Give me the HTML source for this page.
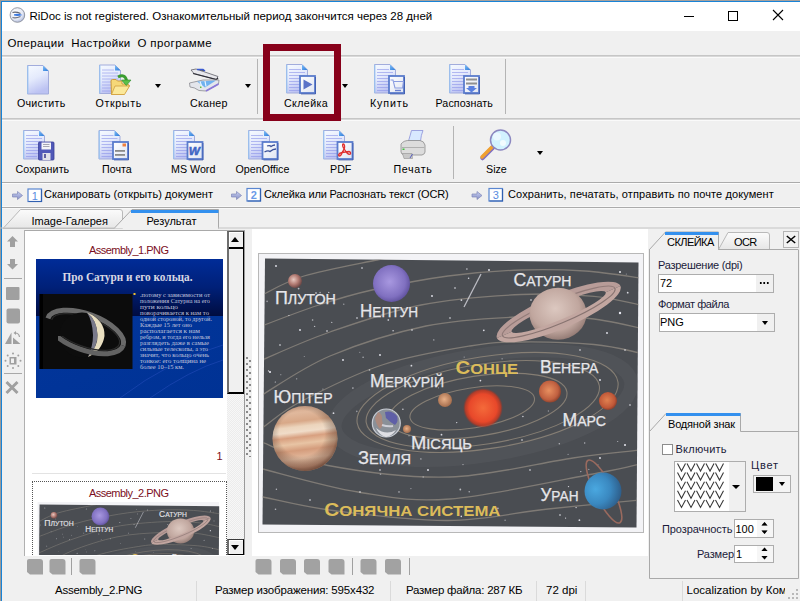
<!DOCTYPE html>
<html><head><meta charset="utf-8">
<style>
*{margin:0;padding:0;box-sizing:border-box}
html,body{width:800px;height:601px;overflow:hidden;background:#f0f0f0;font-family:"Liberation Sans",sans-serif;color:#000}
.a{position:absolute}
.t{position:absolute;white-space:nowrap;line-height:1;font-family:"Liberation Sans",sans-serif}
.hl{position:absolute;height:1px}
.vl{position:absolute;width:1px}
.lb{font-size:10.7px;color:#000}
.st{font-size:11px;color:#000}
.dd{width:0;height:0;border-left:3.5px solid transparent;border-right:3.5px solid transparent;border-top:4px solid #000}
</style></head><body>
<div class="a" style="left:0;top:0;width:800px;height:601px;overflow:hidden">

<!-- window border -->
<div class="a" style="left:0;top:0;width:800px;height:1px;background:#a6a19d"></div>
<div class="a" style="left:0;top:0;width:1px;height:601px;background:#9a9a9a"></div>
<div class="a" style="left:1px;top:1px;width:799px;height:1px;background:#1883d7"></div>
<div class="a" style="left:1px;top:1px;width:1px;height:600px;background:#1883d7"></div>

<!-- title bar -->
<div class="a" style="left:2px;top:2px;width:798px;height:29px;background:#fff"></div>
<div id="title" class="t" style="left:29.5px;top:10.5px;font-size:11.5px;color:#000">RiDoc is not registered. Ознакомительный период закончится через 28 дней</div>

<!-- menu -->
<div class="t" style="left:7.5px;top:37.8px;font-size:11.5px;letter-spacing:0.37px">Операции</div>
<div class="t" style="left:71.2px;top:37.8px;font-size:11.5px;letter-spacing:0.33px">Настройки</div>
<div class="t" style="left:137.4px;top:37.8px;font-size:11.5px;letter-spacing:0.4px">О программе</div>
<div class="hl" style="left:2px;top:55px;width:798px;background:#c6c6c6"></div>
<div class="hl" style="left:2px;top:56px;width:798px;background:#d8d8d8"></div>
<div class="hl" style="left:2px;top:57px;width:798px;background:#fafafa"></div>

<svg class="a" style="left:0;top:56px" width="560" height="126" viewBox="0 56 560 126">
<defs>
  <linearGradient id="gpg" x1="0" y1="0" x2="0.35" y2="1"><stop offset="0" stop-color="#f6faff"/><stop offset="0.5" stop-color="#e4eafc"/><stop offset="1" stop-color="#bcc2f2"/></linearGradient>
  <linearGradient id="gbox" x1="0" y1="0" x2="1" y2="1"><stop offset="0" stop-color="#ffffff"/><stop offset="1" stop-color="#dfe4f2"/></linearGradient>
  <linearGradient id="gfold" x1="0" y1="0" x2="1" y2="1"><stop offset="0" stop-color="#80c0f8"/><stop offset="1" stop-color="#2a78d8"/></linearGradient>
  <symbol id="pg" overflow="visible">
    <path d="M0.5,0.5 H16 L21.5,6 V29 H0.5 Z" fill="url(#gpg)" stroke="#a2acdc" stroke-width="1"/>
    <path d="M0.8,0.8 V28.7" stroke="#9cc4f0" stroke-width="1.2"/>
    <path d="M16,0.5 V6 H21.5 Z" fill="url(#gfold)"/>
  </symbol>
  <symbol id="pgl" overflow="visible">
    <use href="#pg"/>
    <g stroke="#8c94ea" stroke-width="1" opacity="0.6">
      <path d="M3,5.5 H15 M3,8.5 H19 M3,11.5 H19 M3,14.5 H19 M3,17.5 H19 M3,20.5 H19 M3,23.5 H19 M3,26.5 H14"/>
    </g>
  </symbol>
  <symbol id="bx" overflow="visible">
    <rect x="1" y="1" width="15" height="17" fill="url(#gbox)" stroke="#5a7ccc" stroke-width="1.8"/>
    <path d="M16.5,2 V19 H2" stroke="#2a48a0" stroke-width="1" fill="none" opacity="0.6"/>
  </symbol>
</defs>
<!-- Очистить -->
<use href="#pg" x="27" y="65"/>
<!-- Открыть -->
<use href="#pgl" x="99" y="64.5"/>
<path d="M111.5,94.5 L111,81 Q111,79.5 112.5,79.5 H116 L117.5,81 H122 V84 H127.5 L129.5,85.5 L124,94.5 Z" fill="#f6d878" stroke="#cc9a3a" stroke-width="1"/>
<path d="M111.5,94.5 L115,86 H129.5 L124.5,94.5 Z" fill="#fbe89a" stroke="#d0a040" stroke-width="0.8"/>
<path d="M118,77 Q125,73.5 126.5,80.5" fill="none" stroke="#3a9c30" stroke-width="3"/><path d="M121.5,80 L131,80 L126.3,85.5 Z" fill="#5cc048" stroke="#2c8a28" stroke-width="0.6"/>
<!-- Сканер -->
<path d="M191,70 L196,69 L218,76.5 L216.5,79.5 L194,73.5 Z" fill="#e8e8ec" stroke="#606068" stroke-width="0.8"/>
<path d="M197,69.5 L203,69.5 L205,71" stroke="#3a5ad0" stroke-width="1.5"/>
<path d="M193,73.5 L216.5,79.5 L218,78" stroke="#303038" stroke-width="1.2" fill="none"/>
<path d="M189.5,83 L203,80 L219,80 L218.5,84 L206,91 L199,90.5 Q194,87 190,87 Z" fill="#e4e6ec" stroke="#8a8a90" stroke-width="0.8"/>
<path d="M197,81.5 L216,80.5 L205,87.5 Z" fill="#5aa8f0" opacity="0.85"/>
<path d="M200,81.5 L202,87 M205,81 L206,86.5" stroke="#e8f4ff" stroke-width="1.2"/>
<path d="M206,91 L218.5,84" stroke="#8a78d8" stroke-width="2"/>
<rect x="200" y="86.5" width="1.5" height="1.5" fill="#60c040"/>
<!-- Склейка -->
<use href="#pgl" x="286" y="64"/>
<use href="#bx" x="299" y="75"/>
<path d="M303.5,79.5 L312.5,84.5 L303.5,89.5 Z" fill="#5a72c8"/>
<!-- Купить -->
<use href="#pgl" x="374" y="64"/>
<use href="#bx" x="388" y="75"/>
<path d="M390.5,80 H393 L395,88 H402.5 L403.5,81.5 H394" fill="none" stroke="#8a9ce0" stroke-width="1.1"/>
<path d="M395,90.5 H401" stroke="#6a80d0" stroke-width="1.4"/>
<!-- Распознать -->
<use href="#pgl" x="449" y="64"/>
<use href="#bx" x="463" y="75"/>
<rect x="466" y="78.5" width="11" height="2" fill="#909090"/>
<rect x="466" y="82.5" width="11" height="2" fill="#909090"/>
<path d="M468.5,86 H474.5 V88 H477 L471.5,92.5 L466,88 H468.5 Z" fill="#5a80e0"/>

<!-- Сохранить -->
<use href="#pgl" x="23" y="130"/>
<rect x="38.5" y="142" width="15.5" height="18" rx="1" fill="#5058b8" stroke="#3a4098" stroke-width="0.8"/>
<rect x="41.5" y="142.5" width="9.5" height="7" fill="#f4f4f8"/>
<path d="M43,144.5 H49.5 M43,146.5 H49.5" stroke="#9090a0" stroke-width="0.8"/>
<rect x="42.5" y="153" width="8" height="7" fill="#e0e0e8"/>
<rect x="44" y="154" width="2" height="4" fill="#6060a0"/>
<!-- Почта -->
<use href="#pgl" x="98.5" y="130"/>
<use href="#bx" x="112" y="141"/>
<rect x="122.5" y="143.5" width="3.5" height="3" fill="#f08040"/>
<rect x="115" y="150" width="10" height="1.8" fill="#8a8a8a"/>
<rect x="115" y="154" width="10" height="1.8" fill="#8a8a8a"/>
<!-- MS Word -->
<use href="#pgl" x="173" y="130"/>
<use href="#bx" x="186.5" y="141"/>
<text x="188.8" y="154.8" font-family="Liberation Sans, sans-serif" font-style="italic" font-weight="bold" font-size="10.5" fill="#3f66c4" stroke="#3f66c4" stroke-width="0.5" textLength="11.2" lengthAdjust="spacingAndGlyphs">W</text>
<!-- OpenOffice -->
<use href="#pgl" x="248" y="130"/>
<use href="#bx" x="261.5" y="141"/>
<path d="M267,146 Q270,145 271,146.5 Q273,145 275,145" stroke="#3a5098" stroke-width="1.3" fill="none"/>
<path d="M264.5,152 Q268,150 270,151.5 Q273,149 276,149" stroke="#3a5098" stroke-width="1.4" fill="none"/>
<!-- PDF -->
<use href="#pgl" x="323" y="130"/>
<use href="#bx" x="336.5" y="141"/>
<path d="M343,144 Q345,144 344.5,148 L341,155 Q339,157 338.5,155 Q339,153 342,152.5 L349,151.5 Q351,152 350.5,154 Q349,155 347,153 L343.5,148 Q342,145 343,144 Z" fill="none" stroke="#e03030" stroke-width="1.3"/>
<!-- Печать -->
<path d="M411.5,130.5 L423,130.5 Q421,135 420.5,141 L408.5,141 Q410,136 411.5,130.5 Z" fill="#d8e8ff" stroke="#8a90d8" stroke-width="0.8"/>
<path d="M401,144 Q404,140 410,140.5 L420,140.5 Q424,141 425,145 V152 Q425,154 422,155 L405,155 Q401,154.5 401,152 Z" fill="#dcdcdc" stroke="#8c8c8c" stroke-width="0.8"/>
<path d="M402,147.5 H424.5" stroke="#b0b0b0" stroke-width="1"/>
<rect x="402.5" y="148.5" width="2" height="1.5" fill="#40c040"/>
<path d="M402.5,153.5 L412,153.5 L412.5,158.5 L404,158.5 Z" fill="#c8c8c8" stroke="#909090" stroke-width="0.6"/>
<path d="M410,158 L412.5,154" stroke="#5a60c0" stroke-width="1"/>
<!-- Size -->
<path d="M482.5,158 L492.5,148" stroke="#8070c0" stroke-width="4.5" stroke-linecap="round"/>
<path d="M482,157 L492,147" stroke="#f0a030" stroke-width="3.5" stroke-linecap="round"/>
<circle cx="500.5" cy="140" r="10" fill="#d2f2ff" stroke="#8c88c0" stroke-width="1.5"/>
<circle cx="497" cy="136.5" r="4" fill="#ffffff" opacity="0.55"/>
<circle cx="503" cy="143" r="3" fill="#ffffff" opacity="0.7"/>
</svg>

<!-- toolbar 1 -->
<div class="vl" style="left:257px;top:59px;height:55px;background:#b4b4b4"></div>
<div class="vl" style="left:505px;top:59px;height:55px;background:#b4b4b4"></div>
<div class="hl" style="left:2px;top:118px;width:798px;background:#c6c6c6"></div>
<div class="hl" style="left:2px;top:119px;width:798px;background:#d8d8d8"></div>
<div class="hl" style="left:2px;top:120px;width:798px;background:#fafafa"></div>
<div class="t lb" style="left:17px;top:97.5px;letter-spacing:0.24px">Очистить</div>
<div class="t lb" style="left:95.5px;top:97.5px;letter-spacing:0.63px">Открыть</div>
<div class="t lb" style="left:190px;top:97.5px;letter-spacing:0.2px">Сканер</div>
<div class="t lb" style="left:284px;top:97.5px;letter-spacing:0.37px">Склейка</div>
<div class="t lb" style="left:370px;top:97.5px;letter-spacing:0.88px">Купить</div>
<div class="t lb" style="left:435.5px;top:97.5px;letter-spacing:0.08px">Распознать</div>
<div class="a dd" style="left:155px;top:84px"></div>
<div class="a dd" style="left:245px;top:84px"></div>
<div class="a dd" style="left:342px;top:84px"></div>

<!-- toolbar 2 -->
<div class="vl" style="left:453px;top:126px;height:53px;background:#b4b4b4"></div>
<div class="hl" style="left:2px;top:182px;width:798px;background:#ababab"></div>
<div class="hl" style="left:2px;top:183px;width:798px;background:#fcfcfc"></div>
<div class="t lb" style="left:15.5px;top:164px;letter-spacing:0.07px">Сохранить</div>
<div class="t lb" style="left:102px;top:164px">Почта</div>
<div class="t lb" style="left:171px;top:164px">MS Word</div>
<div class="t lb" style="left:235.5px;top:164px">OpenOffice</div>
<div class="t lb" style="left:330px;top:164px">PDF</div>
<div class="t lb" style="left:393.5px;top:164px;letter-spacing:0.65px">Печать</div>
<div class="t lb" style="left:486px;top:164px">Size</div>
<div class="a dd" style="left:537px;top:151px"></div>

<!-- steps bar -->
<div class="hl" style="left:2px;top:206px;width:798px;background:#f8f8f8"></div>
<div class="hl" style="left:2px;top:207px;width:798px;background:#ababab"></div>
<div class="hl" style="left:2px;top:208px;width:798px;background:#f8f8f8"></div>
<div class="t st" style="left:44px;top:189px;letter-spacing:0.05px">Сканировать (открыть) документ</div>
<div class="t st" style="left:264px;top:189px;letter-spacing:-0.17px">Склейка или Распознать текст (OCR)</div>
<div class="t st" style="left:508px;top:189px;letter-spacing:0.1px">Сохранить, печатать, отправить по почте документ</div>
<!-- tabs -->
<svg class="a" style="left:0;top:205px" width="800" height="30" viewBox="0 205 800 30">
  <defs>
    <linearGradient id="tabg" x1="0" y1="0" x2="0" y2="1"><stop offset="0" stop-color="#fbfbfb"/><stop offset="1" stop-color="#e6e6e6"/></linearGradient>
  </defs>
  <path d="M3,228.5 L20.5,209.5 H120 Q122.5,209.5 122.5,212 V228.5 Z" fill="url(#tabg)" stroke="#b9b9b9" stroke-width="1"/>
  <path d="M114,228.5 L132,209.5 H218.5 V228.5" fill="#f0f0f0" stroke="#a9a9a9" stroke-width="1"/>
  <rect x="131" y="210" width="87.5" height="3" fill="#3390ee"/>
  <line x1="218" y1="228" x2="800" y2="228" stroke="#c4c4c4" stroke-width="1.2"/>
  <line x1="0" y1="228" x2="114" y2="228" stroke="#c4c4c4" stroke-width="1.2"/>
</svg>
<div class="t st" style="left:31.5px;top:215.5px;font-size:11px;color:#000">Image-Галерея</div>
<div class="t st" style="left:146.5px;top:215.5px;font-size:11px;color:#000">Результат</div>

<!-- left tool column -->
<div class="hl" style="left:4px;top:278px;width:18px;background:#a8a8a8"></div>
<div class="hl" style="left:4px;top:373px;width:18px;background:#a8a8a8"></div>
<div class="vl" style="left:24px;top:230px;height:326px;background:#b0b0b0"></div>

<!-- gallery panel -->
<div class="a" style="left:25px;top:230px;width:220px;height:326px;background:#fff;border-top:1px solid #a9a9a9"></div>
<div class="t" style="left:89px;top:245px;font-size:11px;letter-spacing:-0.52px;color:#7b0e22">Assembly_1.PNG</div>
<svg class="a" style="left:36px;top:259px" width="187" height="139" viewBox="36 259 187 139">
<defs>
  <linearGradient id="s1top" x1="0" y1="0" x2="0" y2="1"><stop offset="0" stop-color="#002c98"/><stop offset="0.5" stop-color="#002078"/><stop offset="1" stop-color="#000c40"/></linearGradient>
  <linearGradient id="s1bot" x1="0" y1="0" x2="1" y2="1"><stop offset="0" stop-color="#02369c"/><stop offset="1" stop-color="#003294"/></linearGradient>
  <radialGradient id="s1cres" cx="0.2" cy="0.4" r="0.9"><stop offset="0.55" stop-color="#111"/><stop offset="0.75" stop-color="#b8b0a0"/><stop offset="0.9" stop-color="#f0e8c8"/></radialGradient>
</defs>
<rect x="36" y="259" width="187" height="57" fill="url(#s1top)"/>
<rect x="36" y="316" width="187" height="82" fill="url(#s1bot)"/>
<path d="M120,398 Q170,360 223,345" stroke="#2a50c0" stroke-width="1" fill="none" opacity="0.5"/>
<path d="M150,398 Q190,370 223,360" stroke="#2a50c0" stroke-width="1" fill="none" opacity="0.5"/>
<text x="62.5" y="280.7" font-family="Liberation Serif, serif" font-weight="bold" font-size="11.5" fill="#d8d8e4" textLength="130" lengthAdjust="spacingAndGlyphs">Про Сатурн и его кольца.</text>
<clipPath id="s1clip"><rect x="39.5" y="294" width="93" height="75"/></clipPath><rect x="39.5" y="294" width="93" height="75" fill="#0c0c0c"/><g clip-path="url(#s1clip)">
<g transform="rotate(20 85.5 332)">
  <path d="M45.5,332 A40,18 0 0 1 125.5,332" fill="none" stroke="#6a6a6a" stroke-width="5"/>
  <path d="M49.5,332 A36,14.5 0 0 1 121.5,332" fill="none" stroke="#2a2a2a" stroke-width="1.2"/>
</g>
<circle cx="82" cy="335" r="22.5" fill="#0d0d0d"/>
<path d="M87,312.5 Q105,320 104.5,336 Q102,351 88,357 Q98,346 97.5,335 Q97,320 87,312.5 Z" fill="#e8dec0"/>
<path d="M87,312.5 Q97,320 97.5,335 Q97.5,347 88,357 Q93,346 93,335 Q92.5,321 87,312.5 Z" fill="#a8a8c0" opacity="0.7"/>
<clipPath id="s1front"><rect x="58" y="336" width="80" height="40"/></clipPath>
<g clip-path="url(#s1front)"><g transform="rotate(20 85.5 332)">
  <path d="M125.5,332 A40,18 0 0 1 45.5,332" fill="none" stroke="#626262" stroke-width="5"/>
  <path d="M121.5,332 A36,14.5 0 0 1 49.5,332" fill="none" stroke="#2a2a2a" stroke-width="1.2"/>
</g></g>
<rect x="39.5" y="294" width="3.5" height="75" fill="#000"/>
</g>
<rect x="133.5" y="293" width="2" height="2" fill="#f0c030"/>
<g font-family="Liberation Serif, serif" font-size="5.8" fill="#c0c4dc">
  <text x="140" y="296.5" textLength="70" lengthAdjust="spacingAndGlyphs">.потому с зависимости от</text>
  <text x="140" y="302.5" textLength="70" lengthAdjust="spacingAndGlyphs">положения Сатурна на его</text>
  <text x="140" y="308.5" textLength="38" lengthAdjust="spacingAndGlyphs">пути кольцо</text>
  <text x="140" y="314.5" textLength="69" lengthAdjust="spacingAndGlyphs">поворачивается к нам то</text>
  <text x="140" y="320.5" textLength="72" lengthAdjust="spacingAndGlyphs">одной стороной, то другой.</text>
  <text x="140" y="326.5" textLength="52" lengthAdjust="spacingAndGlyphs">Каждые 15 лет оно</text>
  <text x="140" y="332.5" textLength="60" lengthAdjust="spacingAndGlyphs">располагается к нам</text>
  <text x="140" y="338.5" textLength="70" lengthAdjust="spacingAndGlyphs">ребром, и тогда его нельзя</text>
  <text x="140" y="344.5" textLength="69" lengthAdjust="spacingAndGlyphs">разглядеть даже в самые</text>
  <text x="140" y="350.5" textLength="68" lengthAdjust="spacingAndGlyphs">сильные телескопы, а это</text>
  <text x="140" y="356.5" textLength="69" lengthAdjust="spacingAndGlyphs">значит, что кольцо очень</text>
  <text x="140" y="362.5" textLength="66" lengthAdjust="spacingAndGlyphs">тонкое: его толщина не</text>
  <text x="140" y="368.5" textLength="44" lengthAdjust="spacingAndGlyphs">более 10–15 км.</text>
</g>
</svg>

<div class="t" style="left:216.5px;top:450.5px;font-size:11px;color:#7b0e22">1</div>
<div class="hl" style="left:32px;top:473px;width:194px;background:#e3e3e3"></div>
<div class="a" style="left:32px;top:481px;width:195px;height:74px;border:1px dotted #555;border-bottom:none"></div>
<div class="t" style="left:89px;top:487.5px;font-size:11px;letter-spacing:-0.52px;color:#7b0e22">Assembly_2.PNG</div>
<svg class="a" style="left:32px;top:500px" width="194" height="55" viewBox="32 500 194 55">
<rect x="37.6" y="502" width="181.4" height="60" fill="#f3f3f6"/>
<use href="#solarG" transform="translate(-87.9 380.1) scale(0.481)"/>
</svg>
<!-- scrollbar -->
<div class="a" style="left:227px;top:231px;width:18px;height:324px;border-right:1px solid #9a9a9a;background-color:#f7f7f7;background-image:linear-gradient(45deg,#ececec 25%,transparent 25%,transparent 75%,#ececec 75%),linear-gradient(45deg,#ececec 25%,transparent 25%,transparent 75%,#ececec 75%);background-size:2px 2px;background-position:0 0,1px 1px"></div>
<div class="a" style="left:227px;top:231px;width:17px;height:163px;background:#f0f0f0;border-left:2px solid #6e6e6e;border-top:1px solid #5a5a5a;border-right:1px solid #000;border-bottom:2px solid #000"></div>
<div class="a" style="left:229px;top:232px;width:14px;height:15px;border-left:1px solid #fff;border-top:1px solid #fff"></div>
<div class="hl" style="left:229px;top:247px;width:14px;height:2px;background:#000"></div>
<div class="a" style="left:231px;top:237px;width:0;height:0;border-left:4.5px solid transparent;border-right:4.5px solid transparent;border-bottom:5px solid #000"></div>
<div class="a" style="left:227px;top:539px;width:17px;height:16px;background:#f0f0f0;border-left:2px solid #6e6e6e;border-top:1px solid #3a3a3a;border-right:1px solid #000;border-bottom:1px solid #000"></div>
<div class="a" style="left:229px;top:540px;width:14px;height:14px;border-left:1px solid #fff;border-top:1px solid #fff"></div>
<div class="a" style="left:231px;top:544.5px;width:0;height:0;border-left:4.5px solid transparent;border-right:4.5px solid transparent;border-top:5px solid #000"></div>
<!-- splitter dots -->
<svg class="a" style="left:245px;top:355px" width="8" height="102" viewBox="245 355 8 102"><g fill="#8a8a8a"><rect x="246" y="357" width="2" height="2"/><rect x="249" y="360" width="2" height="2"/><rect x="246" y="363" width="2" height="2"/><rect x="249" y="366" width="2" height="2"/><rect x="246" y="369" width="2" height="2"/><rect x="249" y="372" width="2" height="2"/><rect x="246" y="375" width="2" height="2"/><rect x="249" y="378" width="2" height="2"/><rect x="246" y="381" width="2" height="2"/><rect x="249" y="384" width="2" height="2"/><rect x="246" y="387" width="2" height="2"/><rect x="249" y="390" width="2" height="2"/><rect x="246" y="393" width="2" height="2"/><rect x="249" y="396" width="2" height="2"/><rect x="246" y="399" width="2" height="2"/><rect x="249" y="402" width="2" height="2"/><rect x="246" y="405" width="2" height="2"/><rect x="249" y="408" width="2" height="2"/><rect x="246" y="411" width="2" height="2"/><rect x="249" y="414" width="2" height="2"/><rect x="246" y="417" width="2" height="2"/><rect x="249" y="420" width="2" height="2"/><rect x="246" y="423" width="2" height="2"/><rect x="249" y="426" width="2" height="2"/><rect x="246" y="429" width="2" height="2"/><rect x="249" y="432" width="2" height="2"/><rect x="246" y="435" width="2" height="2"/><rect x="249" y="438" width="2" height="2"/><rect x="246" y="441" width="2" height="2"/><rect x="249" y="444" width="2" height="2"/><rect x="246" y="447" width="2" height="2"/><rect x="249" y="450" width="2" height="2"/><rect x="246" y="453" width="2" height="2"/><rect x="249" y="456" width="2" height="2"/></g></svg>

<!-- main panel -->
<div class="a" style="left:252px;top:229px;width:396px;height:327px;background:#fff"></div>
<div class="a" style="left:258px;top:253px;width:386px;height:280px;background:#f3f3f6;border:1px solid #b8b8b8"></div>
<svg class="a" style="left:258px;top:253px" width="386" height="281" viewBox="258 253 386 281">
<defs>
  <filter id="soft" x="-20%" y="-20%" width="140%" height="140%"><feGaussianBlur stdDeviation="0.6"/></filter>
  <clipPath id="imgclip"><polygon points="265,258.5 638.5,262.5 636.5,527.5 262.5,524.5"/></clipPath>
  <radialGradient id="gPluto" cx="0.4" cy="0.4" r="0.6"><stop offset="0" stop-color="#e8c8c0"/><stop offset="0.6" stop-color="#b07870"/><stop offset="1" stop-color="#704a48"/></radialGradient>
  <radialGradient id="gNep" cx="0.45" cy="0.45" r="0.6"><stop offset="0" stop-color="#a898e0"/><stop offset="0.7" stop-color="#8070c0"/><stop offset="1" stop-color="#5a4c98"/></radialGradient>
  <radialGradient id="gSat" cx="0.45" cy="0.4" r="0.65"><stop offset="0" stop-color="#dcc8c0"/><stop offset="0.65" stop-color="#c0a69e"/><stop offset="1" stop-color="#8a726c"/></radialGradient>
  <radialGradient id="gSun" cx="0.5" cy="0.5" r="0.5"><stop offset="0" stop-color="#f46a3a"/><stop offset="0.7" stop-color="#e8482a"/><stop offset="0.88" stop-color="#c83a22" stop-opacity="0.85"/><stop offset="1" stop-color="#a03020" stop-opacity="0"/></radialGradient>
  <radialGradient id="gVen" cx="0.45" cy="0.45" r="0.6"><stop offset="0" stop-color="#e89060"/><stop offset="0.7" stop-color="#c06040"/><stop offset="1" stop-color="#803a28"/></radialGradient>
  <radialGradient id="gMars" cx="0.45" cy="0.45" r="0.6"><stop offset="0" stop-color="#e08050"/><stop offset="0.7" stop-color="#c05838"/><stop offset="1" stop-color="#803828"/></radialGradient>
  <radialGradient id="gMerc" cx="0.45" cy="0.45" r="0.6"><stop offset="0" stop-color="#e8b088"/><stop offset="1" stop-color="#a06848"/></radialGradient>
  <radialGradient id="gEarth" cx="0.55" cy="0.45" r="0.55"><stop offset="0" stop-color="#7088c0"/><stop offset="0.55" stop-color="#4a6090"/><stop offset="0.8" stop-color="#8a96a8"/><stop offset="1" stop-color="#e8ecf0"/></radialGradient>
  <radialGradient id="gUr" cx="0.3" cy="0.45" r="0.8"><stop offset="0" stop-color="#4aa8e0"/><stop offset="0.5" stop-color="#3a88c0"/><stop offset="1" stop-color="#2a5078"/></radialGradient>
  <linearGradient id="gJup" x1="0" y1="0" x2="0.12" y2="1">
    <stop offset="0" stop-color="#d4a488"/><stop offset="0.15" stop-color="#e0b89c"/><stop offset="0.28" stop-color="#d8a888"/>
    <stop offset="0.36" stop-color="#ecd4bc"/><stop offset="0.44" stop-color="#f0dcc8"/><stop offset="0.52" stop-color="#d8a080"/>
    <stop offset="0.62" stop-color="#e8c4a4"/><stop offset="0.72" stop-color="#d49c7c"/><stop offset="0.85" stop-color="#e4bca0"/><stop offset="1" stop-color="#c89478"/>
  </linearGradient>
  <radialGradient id="gJupShade" cx="0.45" cy="0.42" r="0.58"><stop offset="0.6" stop-color="#000" stop-opacity="0"/><stop offset="0.9" stop-color="#40241a" stop-opacity="0.35"/><stop offset="1" stop-color="#40241a" stop-opacity="0.6"/></radialGradient>
</defs>
<g id="solarG"><polygon points="265,258.5 638.5,262.5 636.5,527.5 262.5,524.5" fill="#4a4d52"/>
<g clip-path="url(#imgclip)">
  <g transform="rotate(-9 478 406)" fill="none" stroke="#68686e" stroke-width="14" opacity="0.22">
    <ellipse cx="483" cy="406" rx="150" ry="50"/>
  </g>
  <g transform="rotate(-9 478 406)" fill="none" stroke="#948a7c" stroke-width="1.1" opacity="0.8">
    <ellipse cx="472" cy="407" rx="63" ry="20"/>
    <ellipse cx="478" cy="406" rx="90" ry="30"/>
    <ellipse cx="483" cy="405" rx="118" ry="40"/>
    <ellipse cx="488" cy="404" rx="132" ry="46"/>
  </g>
  <g fill="none" stroke="#8c867e" stroke-width="1.3" opacity="0.8">
<path d="M255,299 C257.3,297.7 253.8,298.8 262,295 C270.2,291.2 284.8,281.8 304,276 C323.2,270.2 357.7,264.0 377,260 C396.3,256.0 405.7,254.7 420,252"/>
<path d="M255,330 C257.3,328.7 251.3,330.2 262,326 C272.7,321.8 300.7,311.0 319,305 C337.3,299.0 350.5,294.8 372,290 C393.5,285.2 423.2,279.3 448,276 C472.8,272.7 498.2,270.8 521,270 C543.8,269.2 565.2,269.7 585,271 C604.8,272.3 629.2,276.5 640,278 C650.8,279.5 646.7,279.3 650,280"/>
<path d="M255,364 C257.3,362.7 249.5,365.3 262,360 C274.5,354.7 303.5,341.2 330,332 C356.5,322.8 389.2,311.2 421,305 C452.8,298.8 492.2,295.9 521,294.5 C549.8,293.1 574.2,294.6 594,296.4 C613.8,298.1 630.7,303.2 640,305 C649.3,306.8 646.7,306.3 650,307"/>
<path d="M255,400 C257.3,398.3 249.5,402.3 262,395 C274.5,387.7 302.7,367.5 330,356 C357.3,344.5 395.0,332.5 426,326 C457.0,319.5 489.5,318.3 516,317 C542.5,315.7 564.3,316.2 585,318 C605.7,319.8 629.2,325.8 640,328 C650.8,330.2 646.7,330.0 650,331"/>
<path d="M262,428 C274.7,419.3 280.0,412.5 300,402 C320.0,391.5 353.7,374.3 382,365 C410.3,355.7 446.8,349.8 470,346 C493.2,342.2 500.3,342.2 521,342 C541.7,341.8 574.2,342.7 594,344.5 C613.8,346.3 630.7,351.1 640,353 C649.3,354.9 646.7,355.0 650,356"/>
<path d="M255,436 C257.3,438.0 249.8,437.1 262,442 C274.2,446.9 296.7,459.7 328,465.5 C359.3,471.3 409.2,478.2 450,477 C490.8,475.8 541.3,462.5 573,458 C604.7,453.5 627.2,451.7 640,450 C652.8,448.3 646.7,448.7 650,448"/>
<path d="M255,466 C257.7,467.0 245.8,464.7 263,469 C280.2,473.3 326.8,487.0 358,492 C389.2,497.0 410.0,502.2 450,499 C490.0,495.8 566.3,478.8 598,473 C629.7,467.2 631.3,465.8 640,464 C648.7,462.2 646.7,462.7 650,462"/>
<path d="M255,495 C257.7,495.7 250.0,494.4 263,497 C276.0,499.6 302.2,506.6 333,510.5 C363.8,514.4 412.2,520.8 448,520.5 C483.8,520.2 516.0,512.4 548,509 C580.0,505.6 623.0,501.7 640,500 C657.0,498.3 646.7,499.3 650,499"/>
  </g>
  <g fill="#e8e8f0">
<circle cx="464.2" cy="357.1" r="0.7" opacity="0.5"/><circle cx="288.3" cy="393.9" r="0.9" opacity="0.7"/><circle cx="280.8" cy="374.7" r="0.6" opacity="0.5"/><circle cx="292.7" cy="285.6" r="0.8" opacity="0.7"/><circle cx="423.2" cy="477.0" r="0.8" opacity="0.5"/><circle cx="312.6" cy="320.0" r="0.8" opacity="0.7"/><circle cx="497.9" cy="508.4" r="0.8" opacity="0.7"/><circle cx="479.4" cy="365.1" r="0.6" opacity="0.5"/><circle cx="626.3" cy="274.1" r="0.6" opacity="0.5"/><circle cx="320.1" cy="292.6" r="0.9" opacity="0.5"/><circle cx="380.5" cy="474.2" r="0.8" opacity="0.5"/><circle cx="333.5" cy="413.2" r="0.9" opacity="0.9"/><circle cx="502.1" cy="358.8" r="0.6" opacity="0.7"/><circle cx="468.6" cy="278.3" r="0.8" opacity="0.9"/><circle cx="288.9" cy="315.5" r="0.6" opacity="0.9"/><circle cx="517.4" cy="373.2" r="0.6" opacity="0.7"/><circle cx="433.8" cy="339.9" r="0.7" opacity="0.7"/><circle cx="559.3" cy="443.7" r="0.7" opacity="0.7"/><circle cx="356.8" cy="411.4" r="0.8" opacity="0.5"/><circle cx="460.3" cy="489.5" r="0.9" opacity="0.7"/><circle cx="627.7" cy="292.7" r="0.9" opacity="0.9"/><circle cx="420.9" cy="458.9" r="0.6" opacity="0.9"/><circle cx="322.9" cy="389.1" r="0.7" opacity="0.5"/><circle cx="548.4" cy="411.0" r="0.7" opacity="0.5"/><circle cx="522.9" cy="416.5" r="0.7" opacity="0.9"/><circle cx="480.4" cy="380.6" r="0.9" opacity="0.9"/><circle cx="576.1" cy="507.6" r="0.7" opacity="0.9"/><circle cx="441.5" cy="434.7" r="0.9" opacity="0.9"/><circle cx="505.1" cy="520.2" r="0.8" opacity="0.5"/><circle cx="409.0" cy="435.8" r="0.7" opacity="0.5"/><circle cx="275.3" cy="382.0" r="0.6" opacity="0.9"/><circle cx="328.8" cy="292.4" r="0.6" opacity="0.9"/><circle cx="314.6" cy="326.4" r="0.7" opacity="0.7"/><circle cx="410.9" cy="488.6" r="0.7" opacity="0.5"/><circle cx="296.7" cy="378.8" r="0.6" opacity="0.7"/><circle cx="469.2" cy="491.7" r="0.7" opacity="0.7"/><circle cx="568.5" cy="486.6" r="0.7" opacity="0.9"/><circle cx="369.5" cy="370.0" r="0.8" opacity="0.7"/><circle cx="399.0" cy="491.9" r="0.9" opacity="0.5"/><circle cx="331.8" cy="322.3" r="0.6" opacity="0.9"/><circle cx="352.9" cy="388.1" r="0.8" opacity="0.7"/><circle cx="483.8" cy="330.3" r="0.9" opacity="0.9"/><circle cx="268.5" cy="370.9" r="0.7" opacity="0.9"/><circle cx="402.9" cy="409.2" r="0.7" opacity="0.9"/><circle cx="617.7" cy="441.5" r="0.6" opacity="0.7"/><circle cx="456.7" cy="422.6" r="0.7" opacity="0.9"/><circle cx="598.0" cy="464.8" r="0.6" opacity="0.5"/><circle cx="588.8" cy="469.4" r="0.7" opacity="0.5"/><circle cx="411.4" cy="365.7" r="0.9" opacity="0.9"/><circle cx="289.9" cy="279.5" r="0.6" opacity="0.9"/><circle cx="343.8" cy="304.2" r="0.6" opacity="0.7"/><circle cx="267.1" cy="301.3" r="0.9" opacity="0.5"/><circle cx="304.3" cy="356.5" r="0.6" opacity="0.5"/><circle cx="276.4" cy="489.3" r="0.7" opacity="0.7"/><circle cx="359.8" cy="352.3" r="0.6" opacity="0.5"/><circle cx="579.4" cy="520.2" r="0.9" opacity="0.9"/><circle cx="438.5" cy="387.8" r="0.6" opacity="0.5"/><circle cx="298.6" cy="288.6" r="0.9" opacity="0.7"/><circle cx="393.1" cy="330.8" r="0.7" opacity="0.9"/><circle cx="275.5" cy="509.3" r="0.8" opacity="0.7"/><circle cx="461.4" cy="300.1" r="0.9" opacity="0.9"/><circle cx="466.9" cy="269.0" r="0.7" opacity="0.9"/><circle cx="461.3" cy="516.4" r="0.8" opacity="0.9"/><circle cx="584.7" cy="443.0" r="0.7" opacity="0.7"/><circle cx="363.1" cy="357.3" r="0.7" opacity="0.7"/><circle cx="463.0" cy="464.6" r="0.6" opacity="0.7"/><circle cx="388.3" cy="320.0" r="0.9" opacity="0.7"/><circle cx="565.6" cy="518.1" r="0.6" opacity="0.9"/><circle cx="580.8" cy="471.6" r="0.7" opacity="0.7"/><circle cx="568.1" cy="454.4" r="0.6" opacity="0.5"/>
    <circle cx="276" cy="266" r="0.9"/><circle cx="316" cy="293" r="0.8"/><circle cx="300" cy="330" r="0.9"/>
    <circle cx="327" cy="331" r="0.8"/><circle cx="343" cy="360" r="0.9"/><circle cx="270" cy="372" r="1.1"/>
    <circle cx="357" cy="318" r="0.8"/><circle cx="380" cy="355" r="0.9"/><circle cx="362" cy="268" r="0.8"/>
    <circle cx="432" cy="296" r="0.9"/><circle cx="450" cy="318" r="0.8"/><circle cx="489" cy="270" r="0.9"/>
    <circle cx="531" cy="300" r="0.8"/><circle cx="620" cy="272" r="1"/><circle cx="620" cy="313" r="1.2"/>
    <circle cx="607" cy="333" r="0.9"/><circle cx="625" cy="350" r="0.8"/><circle cx="455" cy="288" r="0.8"/>
    <circle cx="600" cy="380" r="0.9"/><circle cx="630" cy="405" r="0.8"/><circle cx="522" cy="440" r="0.8"/>
    <circle cx="428" cy="470" r="0.9"/><circle cx="360" cy="492" r="0.8"/><circle cx="380" cy="470" r="0.8"/>
    <circle cx="600" cy="458" r="0.9"/><circle cx="625" cy="445" r="1"/><circle cx="530" cy="470" r="0.8"/>
    <circle cx="310" cy="500" r="0.8"/><circle cx="560" cy="515" r="0.8"/><circle cx="280" cy="345" r="0.8"/>
    <circle cx="395" cy="278" r="0.8"/><circle cx="412" cy="330" r="0.8"/><circle cx="580" cy="350" r="0.8"/>
  </g>
  <path d="M481,274 L464,307" stroke="#d8d8e0" stroke-width="1.3" opacity="0.8"/>
  <!-- planets -->
  <circle cx="295" cy="281" r="7" fill="url(#gPluto)"/>
  <circle cx="391.5" cy="283.5" r="18.5" fill="url(#gNep)"/>
  <g transform="rotate(-22.8 558.7 312)">
    <path d="M491.7,312 A67,17 0 0 1 625.7,312 L609.7,312 A51,8 0 0 0 507.7,312 Z" fill="#b89c98"/>
    <path d="M497.7,312 A59,11 0 0 1 619.7,312" fill="none" stroke="#5a4a4a" stroke-width="1.2" opacity="0.4"/>
  </g>
  <ellipse cx="558" cy="313.7" rx="28.5" ry="26" fill="url(#gSat)"/>
  <g transform="rotate(-22.8 558.7 312)">
    <path d="M625.7,312 A67,17 0 0 1 491.7,312 L507.7,312 A51,8 0 0 0 609.7,312 Z" fill="#c2a6a0"/>
    <path d="M619.7,312 A59,11 0 0 1 497.7,312" fill="none" stroke="#5a4a4a" stroke-width="1.2" opacity="0.55"/>
  </g>
  <circle cx="483" cy="408" r="20" fill="url(#gSun)"/>
  <circle cx="550" cy="391.5" r="11" fill="url(#gVen)"/>
  <circle cx="608" cy="401" r="9" fill="url(#gMars)"/>
  <circle cx="445" cy="400" r="7" fill="url(#gMerc)"/>
  <g filter="url(#soft)"><circle cx="386.3" cy="423" r="14" fill="#8a9098" stroke="#c8ccd4" stroke-width="1.2"/>
  <path d="M378,412 Q383,414 382,420 Q384,426 380,429 Q376,425 375,418 Z" fill="#b08878" opacity="0.85"/>
  <path d="M385,412 Q392,410 397,416 Q399,421 395,425 Q390,422 386,418 Z" fill="#5a5aa8" opacity="0.9"/>
  <path d="M376,428 Q386,436 396,430 Q392,436 386,437 Q379,435 376,428 Z" fill="#e8e8ec" opacity="0.9"/>
  <path d="M382,425 Q388,427 393,426" stroke="#e0e0e8" stroke-width="2" fill="none" opacity="0.8"/></g>
  <circle cx="407" cy="429" r="4" fill="url(#gMerc)"/>
  <circle cx="305" cy="438.5" r="32.5" fill="url(#gJup)"/>
  <circle cx="305" cy="438.5" r="32.5" fill="url(#gJupShade)"/>
  <ellipse cx="604" cy="491.5" rx="9" ry="35" transform="rotate(-27 604 491.5)" fill="none" stroke="#9a6a5e" stroke-width="1.6"/>
  <circle cx="603" cy="491" r="18.5" fill="url(#gUr)"/>
  <path d="M585.3,491 A17.7,17.7 0 0 0 603,508.7" transform="rotate(-18 603.5 491)" fill="none" stroke="#a07060" stroke-width="1.5" opacity="0"/>
</g>
<g font-family="Liberation Sans, sans-serif" fill="#e6e6ea" stroke="#e6e6ea" stroke-width="0.25">
  <text x="275" y="304.2" font-size="17.5" textLength="61" lengthAdjust="spacingAndGlyphs">П<tspan font-size="14">ЛУТОН</tspan></text>
  <text x="360" y="316.7" font-size="17.5" textLength="58" lengthAdjust="spacingAndGlyphs">Н<tspan font-size="14">ЕПТУН</tspan></text>
  <text x="513.5" y="285.5" font-size="17.5" textLength="58" lengthAdjust="spacingAndGlyphs">С<tspan font-size="14">АТУРН</tspan></text>
  <text x="370" y="386.7" font-size="17.5" textLength="74" lengthAdjust="spacingAndGlyphs">М<tspan font-size="14">ЕРКУРІЙ</tspan></text>
  <text x="540" y="373" font-size="17.5" textLength="58.5" lengthAdjust="spacingAndGlyphs">В<tspan font-size="14">ЕНЕРА</tspan></text>
  <text x="273.5" y="402.5" font-size="17.5" textLength="59" lengthAdjust="spacingAndGlyphs">Ю<tspan font-size="14">ПІТЕР</tspan></text>
  <text x="411" y="448.5" font-size="17.5" textLength="61" lengthAdjust="spacingAndGlyphs">М<tspan font-size="14">ІСЯЦЬ</tspan></text>
  <text x="358" y="463.5" font-size="17.5" textLength="53" lengthAdjust="spacingAndGlyphs">З<tspan font-size="14">ЕМЛЯ</tspan></text>
  <text x="562.5" y="425.5" font-size="17.5" textLength="43.5" lengthAdjust="spacingAndGlyphs">М<tspan font-size="14">АРС</tspan></text>
  <text x="540.5" y="500.5" font-size="17.5" textLength="38" lengthAdjust="spacingAndGlyphs">У<tspan font-size="14">РАН</tspan></text>
</g>
<g font-family="Liberation Sans, sans-serif" font-weight="bold" fill="#dcbc5a">
  <text x="455.5" y="374.2" font-size="18.5" textLength="62.5" lengthAdjust="spacingAndGlyphs">С<tspan font-size="15">ОНЦЕ</tspan></text>
  <text x="324.2" y="515.5" font-size="18.5" textLength="176.3" lengthAdjust="spacingAndGlyphs">С<tspan font-size="15">ОНЯЧНА СИСТЕМА</tspan></text>
</g>
</g>
</svg>


<!-- bottom small toolbars -->
<div class="vl" style="left:71px;top:558px;height:17px;background:#a0a0a0"></div>
<div class="vl" style="left:352px;top:558px;height:17px;background:#a0a0a0"></div>
<div class="vl" style="left:409px;top:558px;height:17px;background:#a0a0a0"></div>

<!-- status bar -->
<div class="vl" style="left:196px;top:581px;height:20px;background:#dadada"></div>
<div class="vl" style="left:390px;top:581px;height:20px;background:#dadada"></div>
<div class="vl" style="left:536px;top:581px;height:20px;background:#dadada"></div>
<div class="vl" style="left:585px;top:581px;height:20px;background:#dadada"></div>
<div class="vl" style="left:682px;top:581px;height:20px;background:#dadada"></div>
<div class="t" style="left:55px;top:585px;font-size:11.5px;letter-spacing:-0.25px">Assembly_2.PNG</div>
<div class="t" style="left:215px;top:585px;font-size:11.5px;letter-spacing:-0.16px">Размер изображения: 595x432</div>
<div class="t" style="left:406px;top:585px;font-size:11.5px;letter-spacing:-0.24px">Размер файла: 287 КБ</div>
<div class="t" style="left:546px;top:585px;font-size:11.5px">72 dpi</div>
<div class="t" style="left:686.5px;top:585px;font-size:11.5px;width:98px;overflow:hidden">Localization by Компания</div>

<!-- right panel -->
<svg class="a" style="left:640px;top:225px" width="160" height="360" viewBox="640 225 160 360">
  <path d="M649,250 L665.5,232 H718.5 V250" fill="#f0f0f0" stroke="#a9a9a9"/>
  <rect x="665" y="232" width="53.5" height="3" fill="#3390ee"/>
  <path d="M718.5,249.5 L728,232.5 H767 Q769.5,232.5 769.5,235 V249.5" fill="url(#tabg)" stroke="#b9b9b9"/>
  <path d="M718.5,249.5 H798.5" stroke="#a9a9a9"/>
  <path d="M649.5,250 V578.5 H798.5 V250" fill="none" stroke="#a9a9a9"/>
  <rect x="783.5" y="231.5" width="15" height="16" fill="#f2f2f2" stroke="#b4b4b4"/>
  <path d="M786.8,236 L795.2,243 M795.2,236 L786.8,243" stroke="#000" stroke-width="1.5"/>
  <path d="M649.5,431.5 L666,413.5 H740.5 V431.5 H798.5" fill="#f0f0f0" stroke="#a9a9a9"/>
  <rect x="666" y="413" width="74.5" height="3" fill="#3390ee"/>
</svg>
<div class="t" style="left:667px;top:237px;font-size:11px;letter-spacing:-0.55px">СКЛЕЙКА</div>
<div class="t" style="left:734px;top:237px;font-size:11px;letter-spacing:-0.65px">OCR</div>
<div class="t" style="left:658px;top:259.8px;font-size:11px;letter-spacing:-0.26px;color:#1b1b3a">Разрешение (dpi)</div>
<div class="a" style="left:658px;top:274px;width:116px;height:19px;background:#fff;border:1px solid #adadad"></div>
<div class="a" style="left:756px;top:275px;width:17px;height:17px;background:#f0f0f0"></div>
<div class="t" style="left:660px;top:278px;font-size:11px">72</div>
<div class="a" style="left:759px;top:282px;width:10px;height:2px;background-image:radial-gradient(circle,#000 0.9px,transparent 1.1px);background-size:3.5px 2px"></div>
<div class="t" style="left:658px;top:299.3px;font-size:11px;letter-spacing:-0.42px;color:#1b1b3a">Формат файла</div>
<div class="a" style="left:659px;top:313px;width:116px;height:19px;background:#fff;border:1px solid #adadad"></div>
<div class="a" style="left:757px;top:314px;width:17px;height:17px;background:#f0f0f0"></div>
<div class="t" style="left:660px;top:317px;font-size:11px">PNG</div>
<div class="a dd" style="left:762px;top:320.5px"></div>
<div class="t" style="left:668px;top:418.5px;font-size:11px;letter-spacing:-0.18px">Водяной знак</div>
<div class="a" style="left:662px;top:444px;width:11px;height:11px;background:#fff;border:1px solid #8c8c8c"></div>
<div class="t" style="left:675.5px;top:443.5px;font-size:11px;letter-spacing:0.25px;color:#1b1b3a">Включить</div>
<div class="a" style="left:674px;top:461px;width:72px;height:51px;background:#fff;border:1px solid #adadad"></div>
<div class="a" style="left:729px;top:462px;width:16px;height:49px;background:#f0f0f0"></div>
<div class="a dd" style="left:732px;top:485px;border-left-width:4.5px;border-right-width:4.5px;border-top-width:4.5px"></div>
<div class="t" style="left:751px;top:459.5px;font-size:11px;letter-spacing:0.8px;color:#1b1b3a">Цвет</div>
<div class="a" style="left:753px;top:475px;width:38px;height:18px;background:#f4f4f4;border:1px solid #adadad"></div>
<div class="a" style="left:756px;top:477px;width:16.5px;height:13.5px;background:#000"></div>
<div class="a dd" style="left:779px;top:482px"></div>
<div class="t" style="left:662px;top:523.5px;font-size:11px;letter-spacing:-0.08px;color:#1b1b3a">Прозрачность</div>
<div class="a" style="left:734px;top:519px;width:40px;height:19px;background:#fff;border:1px solid #adadad"></div>
<div class="t" style="left:735.5px;top:523.5px;font-size:11px">100</div>
<div class="t" style="left:697px;top:548.5px;font-size:11px;letter-spacing:-0.15px;color:#1b1b3a">Размер</div>
<div class="a" style="left:734px;top:545px;width:40px;height:18px;background:#fff;border:1px solid #adadad"></div>
<div class="t" style="left:736px;top:548.5px;font-size:11px">1</div>
<!-- title icon & controls -->
<svg class="a" style="left:8px;top:5px" width="20" height="20" viewBox="8 5 20 20">
  <defs><radialGradient id="gti" cx="0.4" cy="0.35" r="0.7"><stop offset="0" stop-color="#ffffff"/><stop offset="0.65" stop-color="#e4e8f4"/><stop offset="1" stop-color="#a8b4d8"/></radialGradient></defs>
  <circle cx="17.4" cy="15" r="7.3" fill="url(#gti)" stroke="#8a8e98" stroke-width="0.9"/>
  <path d="M12.5,12.5 Q16,11.5 20.5,13.5" stroke="#606470" stroke-width="1.3" fill="none"/>
  <path d="M12.5,17.5 Q16,18.5 20.5,16.5" stroke="#707480" stroke-width="1.3" fill="none"/>
  <path d="M14,14.2 Q18,13 22.5,15 Q18,16.5 14,15.5 Z" fill="#3a78e0"/>
</svg>
<div class="a" style="left:684px;top:15.5px;width:10px;height:1px;background:#000"></div>
<div class="a" style="left:728px;top:10.5px;width:10px;height:10px;border:1px solid #000"></div>
<svg class="a" style="left:772px;top:9px" width="12" height="12" viewBox="0 0 12 12"><path d="M1,1 L11,11 M11,1 L1,11" stroke="#000" stroke-width="1.1"/></svg>

<!-- red highlight box -->
<div class="a" style="left:262.5px;top:43.5px;width:78.5px;height:77.5px;border:7.5px solid #87001a"></div>

<!-- steps icons -->
<svg class="a" style="left:0;top:184px" width="520" height="22" viewBox="0 184 520 22">
  <defs>
    <linearGradient id="garr" x1="0" y1="0" x2="0" y2="1"><stop offset="0" stop-color="#c8d0f0"/><stop offset="1" stop-color="#8890c8"/></linearGradient>
    <symbol id="sarr" overflow="visible"><path d="M0.5,3 H5.5 V0.5 L10.5,4.5 L5.5,8.5 V6 H0.5 Z" fill="url(#garr)" stroke="#8088b8" stroke-width="0.7"/></symbol>
    <symbol id="sbox" overflow="visible"><rect x="0.5" y="0.5" width="13.5" height="12.5" fill="#fff" stroke="#5a86d0" stroke-width="1.2"/><path d="M14,1 V13 H1" stroke="#3060b0" stroke-width="1.2" fill="none"/></symbol>
  </defs>
  <use href="#sarr" x="12" y="191"/>
  <use href="#sbox" x="27.5" y="188.5"/>
  <text x="34.75" y="199.5" font-family="Liberation Sans, sans-serif" font-size="11" fill="#5a8ce0" text-anchor="middle">1</text>
  <use href="#sarr" x="231" y="191"/>
  <use href="#sbox" x="246.5" y="188"/>
  <text x="253.75" y="199" font-family="Liberation Sans, sans-serif" font-size="11" font-weight="bold" fill="#6a9ae8" text-anchor="middle">2</text>
  <use href="#sarr" x="471.5" y="191"/>
  <use href="#sbox" x="488.5" y="188"/>
  <text x="495.75" y="199" font-family="Liberation Sans, sans-serif" font-size="11" fill="#5a8ce0" text-anchor="middle">3</text>
</svg>

<!-- left tool icons -->
<svg class="a" style="left:2px;top:230px" width="22" height="170" viewBox="2 230 22 170">
  <g fill="#a0a0a0">
    <path d="M12.5,236 L18,241.5 H15 V247 H10 V241.5 H7 Z"/>
    <path d="M10,259 H15 V264 H18 L12.5,269.5 L7,264 H10 Z"/>
    <rect x="6" y="287" width="13.5" height="13" rx="1"/>
    <path d="M8.5,308.5 H18 Q20,308.5 20,310.5 V321.5 Q20,323.5 18,323.5 H8.5 Q6.5,323.5 6.5,321.5 V310.5 Q6.5,308.5 8.5,308.5 Z"/>
    <path d="M5,344 L11.5,332.5 V344 Z"/>
    <path d="M13,337.5 L20.5,344 H13 Z"/>
    <path d="M15,333 Q19,333 19.5,337" stroke="#a0a0a0" stroke-width="1.2" fill="none"/>
    <path d="M13.5,333 L16,331 V335 Z"/>
    <rect x="9.5" y="357" width="7" height="7.5"/>
    <circle cx="13" cy="353.5" r="1"/><circle cx="13" cy="368" r="1"/>
    <circle cx="5.5" cy="360.8" r="1"/><circle cx="20.5" cy="360.8" r="1"/>
    <circle cx="7.7" cy="355.5" r="1"/><circle cx="18.3" cy="355.5" r="1"/>
    <circle cx="7.7" cy="366" r="1"/><circle cx="18.3" cy="366" r="1"/>
  </g>
  <rect x="11" y="358.5" width="3" height="4.5" fill="#f0f0f0"/>
  <path d="M6.5,382 L17.5,393 M17.5,382 L6.5,393" stroke="#a0a0a0" stroke-width="3"/>
</svg>

<!-- bottom small icons -->
<svg class="a" style="left:20px;top:556px" width="390" height="22" viewBox="20 556 390 22">
  <defs>
    <symbol id="sq1" overflow="visible"><path d="M2,0 H13 Q16,0 16,3 V15.5 H3 L0,13 V2 Q0,0 2,0 Z" fill="#a2a2a2"/></symbol>
  </defs>
  <use href="#sq1" x="27" y="559"/>
  <use href="#sq1" x="49.5" y="559"/>
  <use href="#sq1" x="79.5" y="559"/>
  <use href="#sq1" x="255.5" y="559"/>
  <use href="#sq1" x="280" y="559"/>
  <use href="#sq1" x="304" y="559"/>
  <use href="#sq1" x="328.5" y="559"/>
  <use href="#sq1" x="360.5" y="559"/>
  <use href="#sq1" x="385" y="559"/>
</svg>

<!-- V pattern & spins -->
<svg class="a" style="left:674px;top:461px" width="120" height="105" viewBox="674 461 120 105">
  <g fill="none" stroke="#3a3a3a" stroke-width="1.1">
    <path id="vrow" d="M677.5,463.5 L681.5,471 L685.5,463.5 M687.0,463.5 L691.0,471 L695.0,463.5 M696.5,463.5 L700.5,471 L704.5,463.5 M706.0,463.5 L710.0,471 L714.0,463.5 M715.5,463.5 L719.5,471 L723.5,463.5"/>
    <use href="#vrow" y="9.1"/><use href="#vrow" y="18.2"/><use href="#vrow" y="27.3"/><use href="#vrow" y="36.4"/>
  </g>
  <g fill="#000">
    <path d="M761.5,525.5 L764.5,522 L767.5,525.5 Z"/>
    <path d="M761.5,530.5 L764.5,534 L767.5,530.5 Z"/>
    <path d="M761.5,551 L764.5,547.5 L767.5,551 Z"/>
    <path d="M761.5,556 L764.5,559.5 L767.5,556 Z"/>
  </g>
  <rect x="757" y="520" width="16" height="17" fill="#f0f0f0" opacity="0.6"/>
  <rect x="757" y="546" width="16" height="16" fill="#f0f0f0" opacity="0.6"/>
  <g fill="#000">
    <path d="M761.5,525.5 L764.5,522 L767.5,525.5 Z"/>
    <path d="M761.5,530.5 L764.5,534 L767.5,530.5 Z"/>
    <path d="M761.5,551 L764.5,547.5 L767.5,551 Z"/>
    <path d="M761.5,556 L764.5,559.5 L767.5,556 Z"/>
  </g>
</svg>
<!-- grip -->
<svg class="a" style="left:784px;top:585px" width="16" height="16" viewBox="784 585 16 16">
  <g fill="#b8b8b8"><rect x="796" y="589" width="2" height="2"/><rect x="792" y="593" width="2" height="2"/><rect x="796" y="593" width="2" height="2"/><rect x="788" y="597" width="2" height="2"/><rect x="792" y="597" width="2" height="2"/><rect x="796" y="597" width="2" height="2"/></g>
</svg>

</div>
</body></html>
